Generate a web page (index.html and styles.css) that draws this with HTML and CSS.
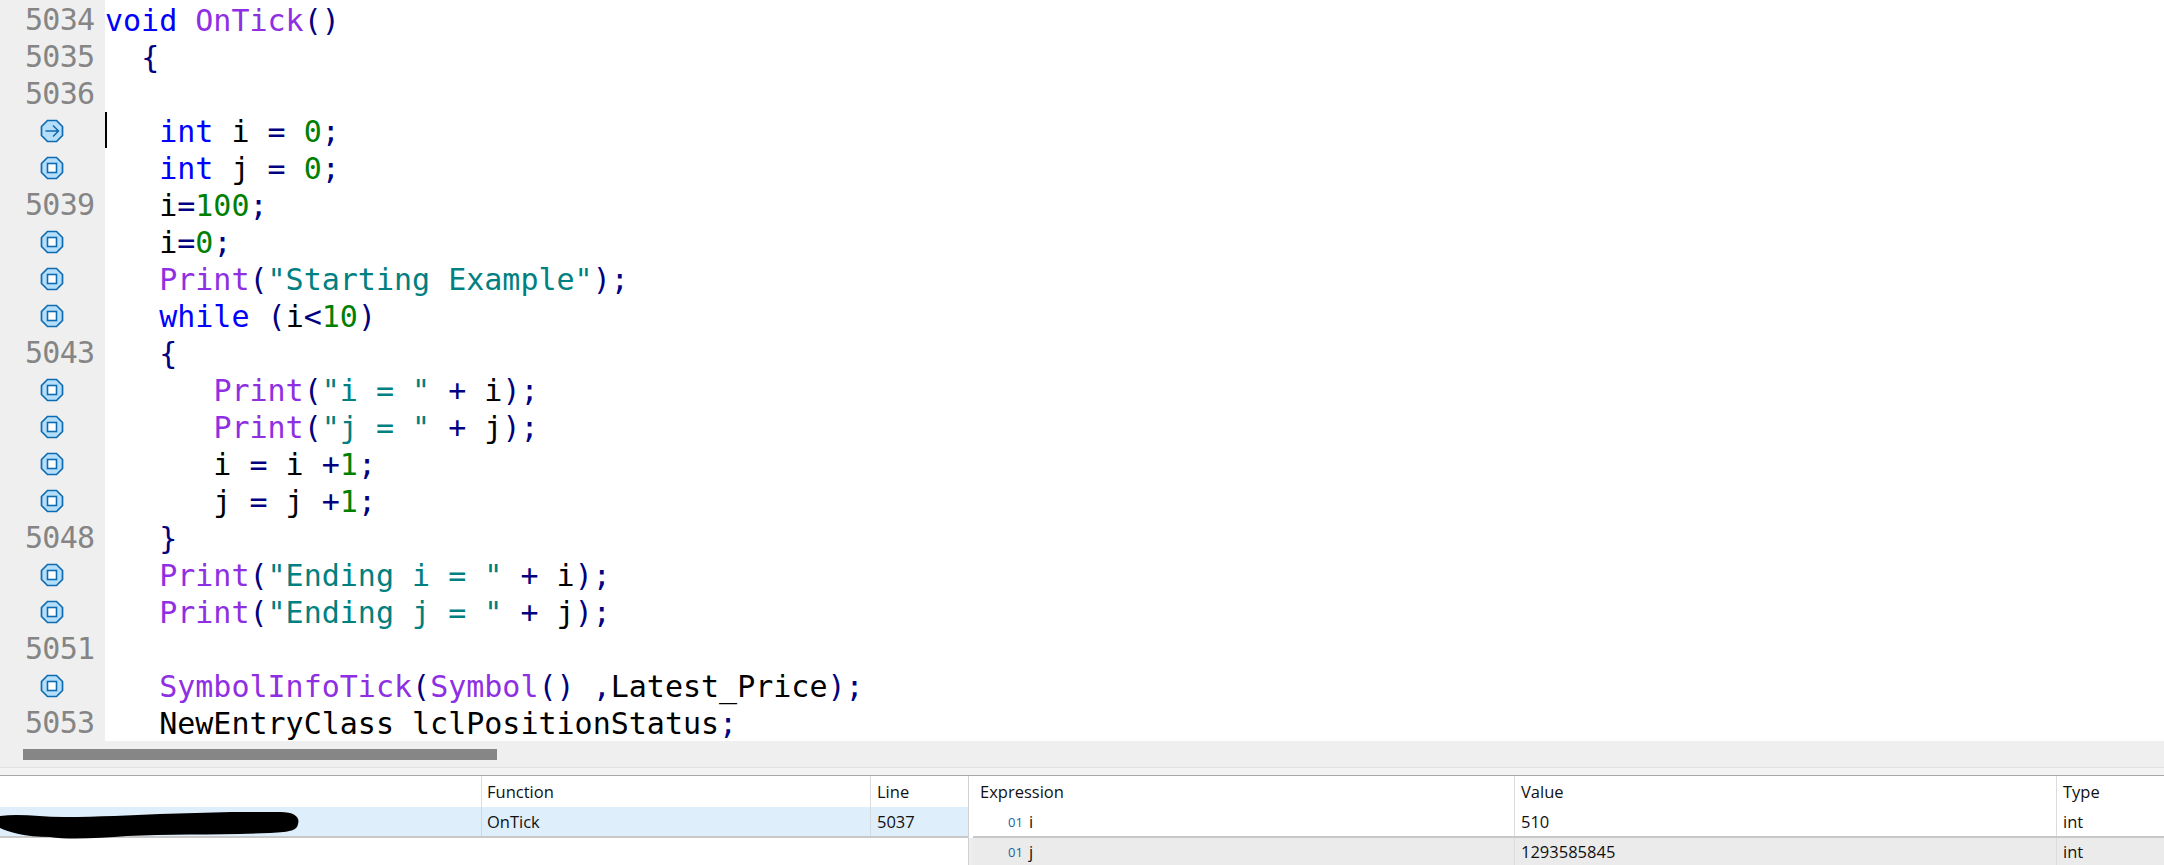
FILE: index.html
```html
<!DOCTYPE html>
<html lang="en">
<head>
<meta charset="utf-8">
<title>Debugger</title>
<link rel="stylesheet" href="styles.css">
</head>
<body>
<svg class="defs" width="0" height="0" aria-hidden="true">
  <symbol id="bp" viewBox="0 0 24 24"><path d="M7.5 1.5h9l6 6v9l-6 6h-9l-6-6v-9z" fill="#b5defb" stroke="#0f6bb0" stroke-width="1.7"/><rect x="7.5" y="7.5" width="9" height="9" fill="#fff" stroke="#0f6bb0" stroke-width="1.6"/></symbol>
  <symbol id="cur" viewBox="0 0 24 24"><path d="M7.5 1.5h9l6 6v9l-6 6h-9l-6-6v-9z" fill="#b5defb" stroke="#0f6bb0" stroke-width="1.7"/><path d="M5.5 12h13M13 6.5l5.5 5.5-5.5 5.5" fill="none" stroke="#0f6bb0" stroke-width="1.5"/></symbol>
</svg>
<main class="editor">
  <div class="line"><span class="gut">5034</span><code class="src"><b class="k">void</b> <b class="f">OnTick</b><b class="p">()</b></code></div>
  <div class="line"><span class="gut">5035</span><code class="src">  <b class="p">{</b></code></div>
  <div class="line"><span class="gut">5036</span><code class="src"></code></div>
  <div class="line"><span class="gut"><svg class="ico"><use href="#cur"/></svg></span><code class="src caretline">   <b class="k">int</b> i <b class="p">=</b> <b class="n">0</b><b class="p">;</b></code></div>
  <div class="line"><span class="gut"><svg class="ico"><use href="#bp"/></svg></span><code class="src">   <b class="k">int</b> j <b class="p">=</b> <b class="n">0</b><b class="p">;</b></code></div>
  <div class="line"><span class="gut">5039</span><code class="src">   i<b class="p">=</b><b class="n">100</b><b class="p">;</b></code></div>
  <div class="line"><span class="gut"><svg class="ico"><use href="#bp"/></svg></span><code class="src">   i<b class="p">=</b><b class="n">0</b><b class="p">;</b></code></div>
  <div class="line"><span class="gut"><svg class="ico"><use href="#bp"/></svg></span><code class="src">   <b class="f">Print</b><b class="p">(</b><b class="s">"Starting Example"</b><b class="p">);</b></code></div>
  <div class="line"><span class="gut"><svg class="ico"><use href="#bp"/></svg></span><code class="src">   <b class="k">while</b> <b class="p">(</b>i<b class="p">&lt;</b><b class="n">10</b><b class="p">)</b></code></div>
  <div class="line"><span class="gut">5043</span><code class="src">   <b class="p">{</b></code></div>
  <div class="line"><span class="gut"><svg class="ico"><use href="#bp"/></svg></span><code class="src">      <b class="f">Print</b><b class="p">(</b><b class="s">"i = "</b> <b class="p">+</b> i<b class="p">);</b></code></div>
  <div class="line"><span class="gut"><svg class="ico"><use href="#bp"/></svg></span><code class="src">      <b class="f">Print</b><b class="p">(</b><b class="s">"j = "</b> <b class="p">+</b> j<b class="p">);</b></code></div>
  <div class="line"><span class="gut"><svg class="ico"><use href="#bp"/></svg></span><code class="src">      i <b class="p">=</b> i <b class="p">+</b><b class="n">1</b><b class="p">;</b></code></div>
  <div class="line"><span class="gut"><svg class="ico"><use href="#bp"/></svg></span><code class="src">      j <b class="p">=</b> j <b class="p">+</b><b class="n">1</b><b class="p">;</b></code></div>
  <div class="line"><span class="gut">5048</span><code class="src">   <b class="p">}</b></code></div>
  <div class="line"><span class="gut"><svg class="ico"><use href="#bp"/></svg></span><code class="src">   <b class="f">Print</b><b class="p">(</b><b class="s">"Ending i = "</b> <b class="p">+</b> i<b class="p">);</b></code></div>
  <div class="line"><span class="gut"><svg class="ico"><use href="#bp"/></svg></span><code class="src">   <b class="f">Print</b><b class="p">(</b><b class="s">"Ending j = "</b> <b class="p">+</b> j<b class="p">);</b></code></div>
  <div class="line"><span class="gut">5051</span><code class="src"></code></div>
  <div class="line"><span class="gut"><svg class="ico"><use href="#bp"/></svg></span><code class="src">   <b class="f">SymbolInfoTick</b><b class="p">(</b><b class="f">Symbol</b><b class="p">()</b> <b class="p">,</b>Latest_Price<b class="p">);</b></code></div>
  <div class="line"><span class="gut">5053</span><code class="src">   NewEntryClass lclPositionStatus<b class="p">;</b></code></div>
</main>
<div class="hbar"><div class="thumb"></div></div>
<div class="gap"></div>
<section class="panes">
  <div class="stack">
    <div class="row head"><span class="c1"></span><span class="c2">Function</span><span class="c3">Line</span></div>
    <div class="row sel"><span class="c1"></span><span class="c2">OnTick</span><span class="c3">5037</span></div>
    <svg class="blob" viewBox="0 0 300 30" aria-hidden="true"><path d="M0 4C20 1 40 5 64 5C100 5 130 3 160 2C200 1 240 -1 280 0C296 0 300 6 298 12C297 18 292 20 270 21C220 23 170 22 127 24C100 26 70 28 50 25C25 25 8 20 0 16Z" fill="#000"/></svg>
  </div>
  <div class="split"></div>
  <div class="watch">
    <div class="row head"><span class="w1">Expression</span><span class="w2">Value</span><span class="w3">Type</span></div>
    <div class="row var"><span class="w1 name"><i class="tag">01</i>i</span><span class="w2">510</span><span class="w3">int</span></div>
    <div class="row var alt"><span class="w1 name"><i class="tag">01</i>j</span><span class="w2">1293585845</span><span class="w3">int</span></div>
  </div>
</section>
</body>
</html>
```
FILE: styles.css
```css
html, body { margin: 0; padding: 0; height: 865px; overflow: hidden; background: #fff; }
.defs { position: absolute; }
.editor { height: 741px; overflow: hidden; font-family: "DejaVu Sans Mono", monospace; font-size: 30px; background: linear-gradient(90deg, #efefef 105px, #fff 105px); }
.line { display: flex; height: 37px; line-height: 37px; }
.gut { flex: 0 0 105px; box-sizing: border-box; background: #efefef; color: #858585; padding: 2px 0 0 25px; letter-spacing: -0.7px; display: flex; align-items: center; }
.ico { width: 24px; height: 24px; margin-left: 15px; }
.src { display: block; font: inherit; white-space: pre; color: #000; flex: 1; padding-top: 2px; }
.src b { font-weight: normal; }
.caretline { position: relative; }
.caretline::before { content: ""; position: absolute; left: 0; top: 1px; width: 2px; height: 36px; background: #000; }
.k { color: #0000ff; }
.f { color: #8f2fe3; }
.s { color: #008080; }
.n { color: #008000; }
.p { color: #000080; }
.hbar { height: 27px; background: #efefef; display: flex; align-items: flex-start; padding: 8px 0 0 23px; box-sizing: border-box; border-bottom: 1px solid #e0e0e0; }
.thumb { width: 474px; height: 11px; background: #868686; }
.gap { height: 7px; background: #f3f3f3; border-bottom: 1px solid #a9a9a9; }
.panes { display: flex; height: 89px; font-family: "Open Sans", sans-serif; font-size: 16.5px; color: #111; }
.stack { position: relative; flex: 0 0 968px; }
.split { flex: 0 0 5px; background: linear-gradient(#fff 0 62px, #ededed 62px); border-left: 1px solid #d0d0d0; box-sizing: border-box; }
.watch { flex: 1; }
.row { display: flex; align-items: center; box-sizing: border-box; }
.head { height: 31px; }
.sel { height: 31px; background: #dfeefb; border-bottom: 2px solid #c8c8c8; }
.c1 { flex: 0 0 482px; box-sizing: border-box; height: 100%; border-right: 1px solid #cfd6dc; }
.c2 { flex: 0 0 389px; box-sizing: border-box; padding-left: 5px; height: 100%; display: flex; align-items: center; border-right: 1px solid #d5dde3; }
.c3 { flex: 1; padding-left: 6px; height: 100%; display: flex; align-items: center; }
.head .c1, .head .c2 { border-right-color: #dcdcdc; }
.w1 { flex: 0 0 542px; box-sizing: border-box; padding-left: 7px; height: 100%; display: flex; align-items: center; border-right: 1px solid #dcdcdc; }
.w2 { flex: 0 0 542px; box-sizing: border-box; padding-left: 6px; height: 100%; display: flex; align-items: center; border-right: 1px solid #dcdcdc; }
.w3 { flex: 1; padding-left: 6px; height: 100%; display: flex; align-items: center; }
.var { height: 31px; border-bottom: 2px solid #c8c8c8; }
.alt { height: 27px; background: #ebebeb; border-bottom: 0; }
.name { padding-left: 35px; }
.tag { font-style: normal; font-size: 13px; color: #17649f; margin-right: 6px; }
.blob { position: absolute; left: 0; top: 36px; width: 300px; height: 30px; }
```
